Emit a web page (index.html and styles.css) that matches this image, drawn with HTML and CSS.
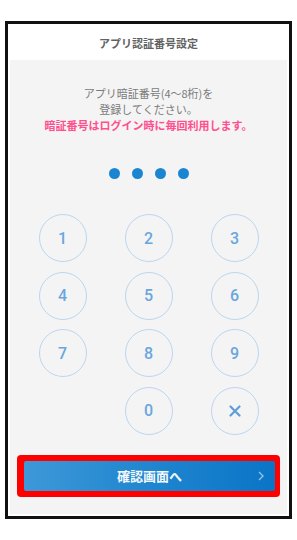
FILE: index.html
```html
<!DOCTYPE html>
<html lang="ja">
<head>
<meta charset="utf-8">
<link rel="stylesheet" href="styles.css">
</head>
<body>
<div class="frame">
  <div class="header">アプリ認証番号設定</div>
  <div class="panel">
    <div class="msg">
      <p>アプリ暗証番号(4〜8桁)を</p>
      <p>登録してください。</p>
      <p class="warn">暗証番号はログイン時に毎回利用します。</p>
    </div>
    <div class="dots">
      <span class="dot"></span><span class="dot"></span><span class="dot"></span><span class="dot"></span>
    </div>
    <div class="keypad">
      <div class="key">1</div><div class="key">2</div><div class="key">3</div>
      <div class="key">4</div><div class="key">5</div><div class="key">6</div>
      <div class="key">7</div><div class="key">8</div><div class="key">9</div>
      <div class="key blank"></div><div class="key">0</div>
      <div class="key"><svg width="12" height="12" viewBox="0 0 12 12"><path d="M1.5 1.5 L10.5 10.5 M10.5 1.5 L1.5 10.5" stroke="#5d9fdb" stroke-width="2.2" fill="none" stroke-linecap="round"/></svg></div>
    </div>
    <div class="highlight">
      <div class="btn">
        <span class="btn-label">確認画面へ</span>
        <span class="chev"><svg width="6" height="10" viewBox="0 0 6 10"><path d="M1 1 L5 5 L1 9" stroke="#8fc2ea" stroke-width="1.4" fill="none"/></svg></span>
      </div>
    </div>
  </div>
</div>
</body>
</html>
```
FILE: styles.css
```css
* { box-sizing: border-box; }
html, body { margin: 0; padding: 0; background: #fff; }
body {
  font-family: "Noto Sans CJK JP", "Noto Sans", sans-serif;
  width: 297px;
  height: 540px;
  overflow: hidden;
}
.frame {
  margin: 21px 0 0 5px;
  width: 287px;
  height: 498px;
  border: 3px solid #111;
  background: #fff;
  display: flex;
  flex-direction: column;
}
.header {
  height: 36px;
  display: flex;
  align-items: center;
  justify-content: center;
  font-size: 11px;
  font-weight: 700;
  color: #626262;
  padding-top: 1px;
}
.panel {
  flex: 1;
  margin: 0 2px 2px 2px;
  background: #f4f4f4;
  display: flex;
  flex-direction: column;
  align-items: center;
  padding-top: 25px;
}
.msg { text-align: center; font-size: 11px; line-height: 16px; color: #7a7a7a; }
.msg p { margin: 0; }
.msg .warn { color: #ff4f8e; font-weight: 700; }
.dots {
  display: flex;
  gap: 12px;
  margin-top: 35px;
}
.dot {
  width: 11px;
  height: 11px;
  border-radius: 50%;
  background: #1a85d1;
}
.keypad {
  display: grid;
  grid-template-columns: repeat(3, 48px);
  grid-auto-rows: 48px;
  column-gap: 38px;
  row-gap: 9.5px;
  margin-top: 35px;
}
.key {
  border: 1.5px solid #bcd6ef;
  border-radius: 50%;
  display: flex;
  align-items: center;
  justify-content: center;
  font-family: Roboto, "Noto Sans", sans-serif;
  font-size: 16px;
  font-weight: 500;
  color: #6aa6de;
}
.key.blank { border: none; }
.highlight {
  margin-top: 20px;
  width: 263px;
  height: 42px;
  background: #ff0000;
  border-radius: 4px;
  padding: 6px 5px 6px 7px;
}
.btn {
  width: 100%;
  height: 100%;
  border-radius: 2px;
  background: linear-gradient(90deg, #3e98d8 0%, #1f86cf 50%, #0a74c7 100%);
  display: flex;
  align-items: center;
  justify-content: center;
  position: relative;
}
.btn-label {
  color: #fff;
  font-size: 13px;
  font-weight: 700;
  opacity: 0.95;
}
.chev {
  position: absolute;
  right: 11px;
  top: 10px;
  display: flex;
}
```
